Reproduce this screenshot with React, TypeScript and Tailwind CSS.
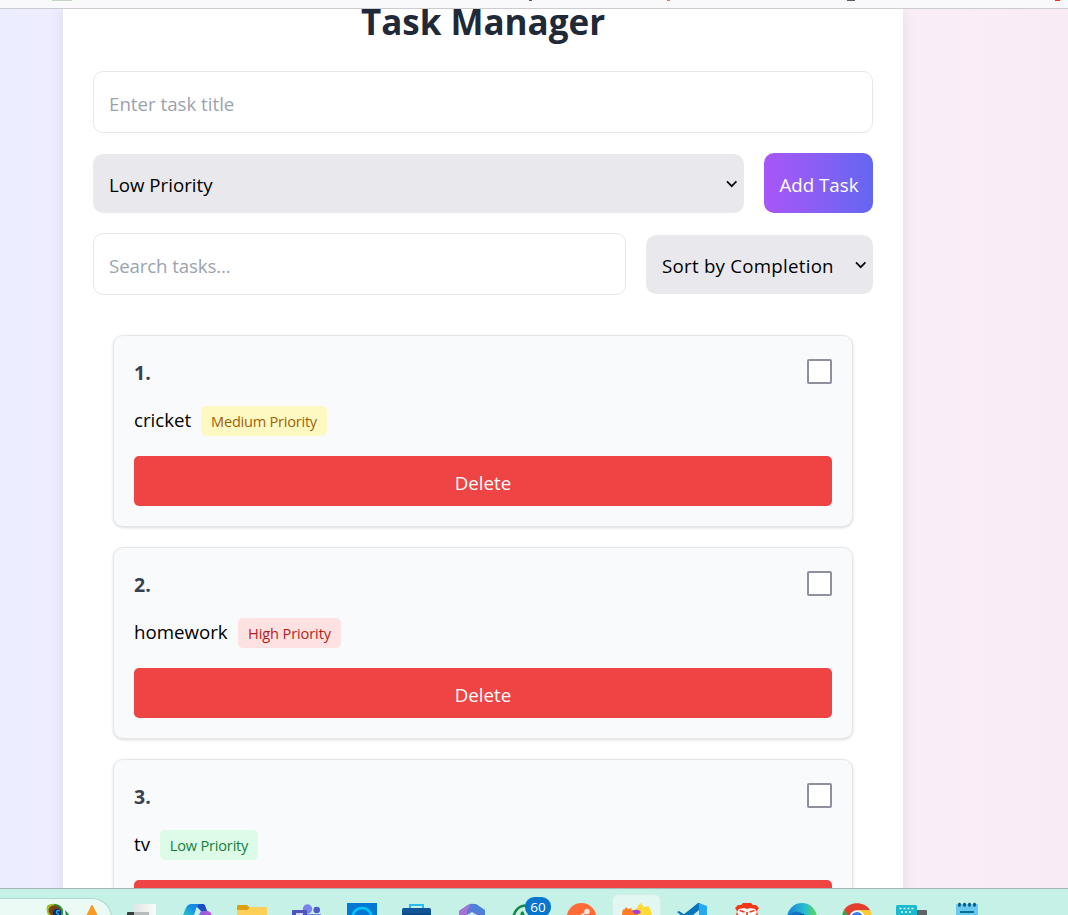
import type { ReactNode } from "react";

type Priority = "Low" | "Medium" | "High";

const tasks: { id: number; title: string; titleClass: string; priority: Priority }[] = [
  { id: 1, title: "cricket", titleClass: "w-[57px]", priority: "Medium" },
  { id: 2, title: "homework", titleClass: "w-[94px]", priority: "High" },
  { id: 3, title: "tv", titleClass: "w-[16px]", priority: "Low" },
];

const badgeStyles: Record<Priority, string> = {
  Low: "w-[98px] bg-[#dcfce7] text-[#15803d] tracking-[-0.2px]",
  Medium: "w-[126px] bg-[#fef9c3] text-[#a16207] tracking-[-0.25px]",
  High: "w-[103px] bg-[#fee2e2] text-[#b91c1c] tracking-[-0.12px]",
};

function Chevron() {
  return (
    <svg width="12" height="8" viewBox="0 0 12 8" className="pointer-events-none mt-px shrink-0" fill="none">
      <path d="M1 1.4 5.700 6.200l4.700-4.800" stroke="#0c0c0d" strokeWidth="1.8" />
    </svg>
  );
}

function TaskCard({ id, title, titleClass, priority }: (typeof tasks)[number]) {
  return (
    <li className="flex h-48 shrink-0 flex-col rounded-[10px] border border-[#e5e7eb] bg-[#f9fafb] px-5 pt-[23px] shadow-[0_1px_3px_rgba(0,0,0,0.14)]">
      <div className="flex h-[25px] items-center justify-between">
        <span className="pt-[3px] text-[19.5px] font-bold leading-6 text-[#374151]">{id}.</span>
        <input type="checkbox" aria-label={title} className="size-[25px] appearance-none rounded-[2px] border-2 border-[#8f8f9d] bg-white" />
      </div>
      <div className="mt-[22px] flex h-[30px] gap-2.5">
        <span className={`${titleClass} shrink-0 whitespace-nowrap leading-[28px] text-black`}>{title}</span>
        <span className={`${badgeStyles[priority]} flex h-[30px] items-center justify-center whitespace-nowrap rounded-[5px] pt-px text-[14.6px]`}>
          {priority} Priority
        </span>
      </div>
      <button className="mt-5 h-[50px] w-full rounded-[5px] bg-[#ef4444] pt-1 text-white">Delete</button>
    </li>
  );
}

function Cell({ children, active }: { children: ReactNode; active?: boolean }) {
  return (
    <div className="flex w-[55px] shrink-0 justify-center">
      <div className={active ? "flex h-[30px] w-[49px] justify-center rounded-md border border-[#d3eee6] bg-[#e2f7f1]" : "flex justify-center"}>
        <svg width="55" height="21" viewBox="0 0 55 21" className={active ? "-mt-px shrink-0" : "shrink-0"}>
          {children}
        </svg>
      </div>
    </div>
  );
}

function Taskbar() {
  return (
    <footer className="flex h-[27px] shrink-0 overflow-hidden border-t border-[#a3b8b2] bg-[#c6f1e6]">
      <div className="mt-[9px] flex h-[40px] w-[112px] shrink-0 rounded-tr-[20px] border-t border-r border-[#add9ce] bg-[#ecfaf6]">
        <svg width="110" height="17" viewBox="0 0 110 17">
          <path d="M47 7C50 4 58 4 61 8c3 4 3 7 0 11H51C47 16 46 11 47 7z" fill="#a5bd20" />
          <path d="M54 5c4 0 8 2 9 6v8h-5z" fill="#249b45" />
          <ellipse cx="55" cy="12" rx="6.5" ry="5.5" transform="rotate(20 55 12)" fill="#754317" />
          <circle cx="57" cy="14" r="4" fill="#052e76" />
          <path d="M60 12c-4-2-5 3-1 3" fill="none" stroke="#15b9e8" strokeWidth="1.3" />
          <path d="m65 11 5 6h-4z" fill="#147d3b" />
          <path d="M92 6q1 0 1.5 2L98 17H86l4.500-9Q91 6 92 6z" fill="#f99b22" />
        </svg>
      </div>
      <nav className="ml-[2px] mt-[5px] flex h-[30px] shrink-0">
        <Cell>
          <defs>
            <linearGradient id="tv"><stop stopColor="#e2e5e4" /><stop offset="1" stopColor="#fbfbfb" /></linearGradient>
          </defs>
          <rect x="13" y="18" width="22" height="6" rx="1" fill="#373c3e" />
          <rect x="20" y="10" width="22" height="14" rx="1" fill="url(#tv)" />
          <rect x="20" y="18" width="15" height="3" fill="#b6bbbb" />
        </Cell>
        <Cell>
          <defs>
            <linearGradient id="cp" x1="0" y1="1" x2="1" y2="0"><stop stopColor="#29c5c0" /><stop offset=".6" stopColor="#168fe5" /><stop offset="1" stopColor="#1580e0" /></linearGradient>
            <linearGradient id="cq"><stop stopColor="#7b64dd" /><stop offset="1" stopColor="#c94fd8" /></linearGradient>
          </defs>
          <path d="M28 10h6q2 0 3 4l1 3h-6l-4-4z" fill="#184fc4" />
          <path d="M22 10h9q-3 1-4 5l-2 6H14q1-2 2-5 2-6 6-6z" fill="url(#cp)" />
          <path d="M32 17h7q3 1 4 4H30z" fill="url(#cq)" />
        </Cell>
        <Cell>
          <path d="M13 12q0-1 1-1h9l3 3-2 3H13z" fill="#dda013" />
          <path d="M13 16h10l4-3h15q1 0 1 1v8H13z" fill="#ffd058" />
        </Cell>
        <Cell>
          <circle cx="28.5" cy="15" r="4.7" fill="#7b83eb" />
          <circle cx="37.7" cy="16" r="3.3" fill="#5059c9" />
          <path d="M22 20h20v3H22z" fill="#7880df" />
          <rect x="13" y="16" width="15" height="8" rx="1" fill="#4b53bc" />
          <path d="M17 20h7" stroke="#fff" strokeWidth="1.5" />
        </Cell>
        <Cell>
          <rect x="13" y="9" width="30" height="14" fill="#0078d4" />
          <circle cx="28" cy="23.500" r="9.500" fill="none" stroke="#00c8f5" strokeWidth="2.600" />
        </Cell>
        <Cell>
          <path d="M21 15v-4h13v4" fill="none" stroke="#27bdf2" strokeWidth="2" />
          <rect x="13" y="14" width="29" height="10" rx="1.5" fill="#105596" />
          <path d="M14 20h27" stroke="#0d447c" />
        </Cell>
        <Cell>
          <path d="m15 17 9-6q3-2 6-1l11 7v6H15z" fill="#5b79da" />
          <path d="m15 17 9-6 3-1-4 7v5h-8z" fill="#a473d4" />
          <path d="m27 10 5 0 9 6v5l-8-3-6-3z" fill="#4b83db" />
          <path d="m23 21 5-3 5 3z" fill="#c6f1e6" />
        </Cell>
        <Cell>
          <circle cx="27" cy="24" r="12.5" fill="#c7f0df" stroke="#138848" strokeWidth="2.6" />
          <path d="M22 18q2-2 3 1l1 3h-5z" fill="#138848" />
          <rect x="26" y="3" width="26" height="20" rx="9.5" fill="#0875cf" />
          <text x="39" y="18" textAnchor="middle" fill="#fff" fontSize="13.5" fontFamily="Open Sans, sans-serif">60</text>
        </Cell>
        <Cell>
          <circle cx="27.5" cy="24" r="15" fill="#ff6c37" />
          <circle cx="33" cy="17.5" r="2.7" fill="#ffe5dc" />
          <path d="m31 19-8 5" stroke="#ffe5dc" strokeWidth="2" />
        </Cell>
        <Cell active>
          <path d="M25 16q3-1 4-4 1-2 3-3 1 3 4 4l3-1q3 3 4 10H25z" fill="#ffd934" />
          <path d="m13 20 1-5 1 1 2-3 2 2 4-1-1 2q5 0 7 5v2H13z" fill="#ff7b24" />
          <path d="M23 17q6-3 9 1-2 3-6 2z" fill="#a33ddd" />
        </Cell>
        <Cell>
          <path d="m13 18 2-1 6 4-2 2zM19 21 34 9h2v13H18z" fill="#0875bc" />
          <path d="m35 9 8 3v11h-8z" fill="#27a8ef" />
          <path d="m35 16-6 5h6z" fill="#c6f1e6" />
        </Cell>
        <Cell>
          <path d="m16 14 3-3h3l2-2h8l2 2h3l3 3-2 3 1 5H17l1-5z" fill="#f43817" />
          <path d="m20 15 5-1 3 1 3-1 5 1 2 3-2 4H20l-2-4z" fill="#fff" />
          <path d="m20.500 16.500 5 1.500M35.500 16.500l-5 1.500M28 18v4" stroke="#f43817" strokeWidth="1.6" />
        </Cell>
        <Cell>
          <defs>
            <linearGradient id="edge"><stop stopColor="#1680d3" /><stop offset=".6" stopColor="#28bed0" /><stop offset="1" stopColor="#5fd953" /></linearGradient>
          </defs>
          <circle cx="28" cy="24" r="15" fill="url(#edge)" />
          <path d="M14 22q9-9 18 1H14z" fill="#1274c5" />
          <path d="M24 23q2-4 6-3l2 4z" fill="#075398" />
        </Cell>
        <Cell>
          <path d="M15 16c5-9 21-9 26 0l-7 3-14 4z" fill="#e43e2f" />
          <path d="m15 16 7 8h-9q0-5 2-8z" fill="#30a650" />
          <path d="M28 16h13q2 3 2 8H32z" fill="#fcc934" />
          <circle cx="28" cy="24" r="7.8" fill="#fff" />
          <circle cx="28" cy="24" r="6" fill="#347de8" />
        </Cell>
        <Cell>
          <rect x="27" y="16" width="16" height="8" rx="1" fill="#5b6467" />
          <rect x="12" y="11" width="21" height="12" rx="1.5" fill="#19b9cf" />
          <path d="M15.5 14.5h14M17 18h12" stroke="#dfffff" strokeWidth="1.7" strokeDasharray="2 2" />
        </Cell>
        <Cell>
          <rect x="17" y="10" width="22" height="14" rx="1" fill="#68c8ee" />
          <path d="M21 18h14" stroke="#087197" strokeWidth="2" />
          <path d="M20.5 10v1.500m5-1.500v1.500m5-1.500v1.500m5-1.500v1.500" stroke="#07577a" strokeWidth="2.7" strokeLinecap="round" />
        </Cell>
      </nav>
    </footer>
  );
}

export default function App() {
  return (
    <div className="flex h-[915px] w-[1068px] flex-col overflow-hidden bg-white font-['Open_Sans','Noto_Sans',sans-serif] text-[18.7px]">
      <header className="h-[9px] shrink-0 overflow-hidden border-b border-[#cccccf] bg-[#f9f9fb]">
        <svg width="1068" height="8" viewBox="0 0 1068 8">
          <path d="M52 0h20v1H52z" fill="#c5d6c2" />
          <path d="M529 0h3v1h-3zM847 0h8v1h-8z" fill="#5b5b66" />
          <path d="M667 0h3v1h-3z" fill="#f56b60" />
          <path d="M1055 0h5v1h-5z" fill="#ff3019" />
        </svg>
      </header>
      <div className="min-h-0 flex-1 overflow-hidden bg-linear-to-r from-[#ecedff] via-[#f9eef8] via-85% to-[#f9ebf5] pl-[63px]">
        <main className="flex h-[1000px] w-[840px] flex-col bg-white px-[30px] shadow-[0_0_14px_rgba(0,0,0,0.08)]">
          <h1 className="-mt-[10px] h-[72px] whitespace-nowrap text-center text-[35px] font-bold leading-[45px] text-[#1f2937]">Task Manager</h1>
          <input placeholder="Enter task title" className="h-[62px] w-full shrink-0 rounded-[10px] border border-[#e5e7eb] px-[15px] pt-0.5 outline-none placeholder:text-[#9ca3af]" />
          <div className="mt-5 flex h-[60px] shrink-0 items-end gap-5">
            <div className="flex h-[59px] flex-1 items-center rounded-[10px] bg-[#e9e9ed] pr-[6px]">
              <select aria-label="Priority" className="h-full flex-1 appearance-none pl-4 pt-1 text-black outline-none">
                <option>Low Priority</option>
              </select>
              <Chevron />
            </div>
            <button className="h-[60px] w-[109px] whitespace-nowrap rounded-[10px] bg-linear-to-r from-[#a855f7] to-[#6366f1] pl-px pt-1 text-white">Add Task</button>
          </div>
          <div className="mt-5 flex h-[62px] shrink-0 items-center gap-5">
            <input placeholder="Search tasks..." className="h-[62px] w-[533px] rounded-[10px] border border-[#e5e7eb] px-[15px] pt-0.5 tracking-[-0.12px] outline-none placeholder:text-[#9ca3af]" />
            <div className="flex h-[59px] flex-1 items-center rounded-[10px] bg-[#e9e9ed] pr-[6px]">
              <select aria-label="Sort" className="h-full min-w-0 flex-1 appearance-none pl-4 pt-1 tracking-[0.25px] text-black outline-none">
                <option>Sort by Completion</option>
              </select>
              <Chevron />
            </div>
          </div>
          <ul className="mt-10 flex flex-col gap-5 px-5">
            {tasks.map((t) => (
              <TaskCard key={t.id} {...t} />
            ))}
          </ul>
        </main>
      </div>
      <Taskbar />
    </div>
  );
}
